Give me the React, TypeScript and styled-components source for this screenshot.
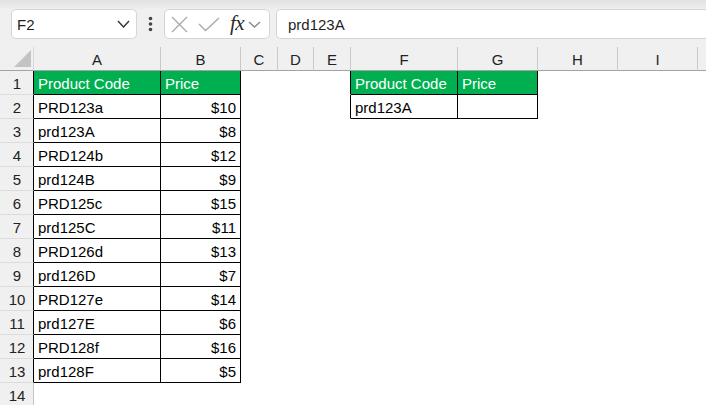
import React from 'react';
import styled, { createGlobalStyle } from 'styled-components';

const GlobalStyle = createGlobalStyle`
  html, body {
    margin: 0;
    padding: 0;
    background: #fff;
  }
  body {
    font-family: 'Liberation Sans', Arial, sans-serif;
    overflow: hidden;
  }
`;

type Row = { code: string; price: string };

const products: Row[] = [
	{ code: 'PRD123a', price: '$10' },
	{ code: 'prd123A', price: '$8' },
	{ code: 'PRD124b', price: '$12' },
	{ code: 'prd124B', price: '$9' },
	{ code: 'PRD125c', price: '$15' },
	{ code: 'prd125C', price: '$11' },
	{ code: 'PRD126d', price: '$13' },
	{ code: 'prd126D', price: '$7' },
	{ code: 'PRD127e', price: '$14' },
	{ code: 'prd127E', price: '$6' },
	{ code: 'PRD128f', price: '$16' },
	{ code: 'prd128F', price: '$5' },
];

const columns = ['A', 'B', 'C', 'D', 'E', 'F', 'G', 'H', 'I', ''];
const widths = [34, 127, 80, 37, 36, 37, 107, 80, 80, 80, 80];
const ROWS = 14;

// what sits in each cell, keyed by "row:col" (col 1 = A)
const cells: { [k: string]: { text: string; head?: boolean; right?: boolean } } = {
	'1:1': { text: 'Product Code', head: true },
	'1:2': { text: 'Price', head: true },
	'1:6': { text: 'Product Code', head: true },
	'1:7': { text: 'Price', head: true },
	'2:6': { text: 'prd123A' },
	'2:7': { text: '' },
};
products.forEach((p, i) => {
	cells[`${i + 2}:1`] = { text: p.code };
	cells[`${i + 2}:2`] = { text: p.price, right: true };
});

const inTable = (r: number, c: number) => cells[`${r}:${c}`] !== undefined;

const Page = styled.div`
  width: 706px;
  height: 405px;
  overflow: hidden;
  background: #fff;
`;

const FormulaBar = styled.div`
  display: flex;
  align-items: center;
  height: 47px;
  box-sizing: border-box;
  padding: 9px 0 8px 11px;
  background: linear-gradient(#e2e2e2 0, #ececec 8px, #f0f0f0 9px);
`;

const Box = styled.div`
  height: 30px;
  box-sizing: border-box;
  background: #fff;
  border: 1px solid #d5d5d5;
  border-radius: 5px;
  display: flex;
  align-items: center;
`;

const NameBox = styled(Box)`
  width: 126px;
  justify-content: space-between;
  padding: 0 6px 0 5px;
  font-size: 15px;
  color: #1f1f1f;
`;

const Dots = styled.svg`
  margin-left: 11px;
  flex: none;
`;

const FxBox = styled(Box)`
  width: 106px;
  margin-left: 11px;
  padding: 0 2px 0 6px;
  gap: 0;
`;

const Fx = styled.span`
  font-family: 'Liberation Serif', 'Times New Roman', serif;
  font-style: italic;
  font-size: 21px;
  color: #2b2b2b;
  margin: 0 4px 2px 10px;
  letter-spacing: -0.5px;
`;

const Input = styled(Box)`
  flex: 1;
  margin-left: 6px;
  border-right: none;
  border-radius: 5px 0 0 5px;
  padding-left: 11px;
  font-size: 15px;
  color: #1f1f1f;
`;

const Sheet = styled.div`
  display: grid;
  grid-template-columns: ${widths.map(w => `${w}px`).join(' ')};
  grid-auto-rows: 24px;
  font-size: 15px;
`;

const HeadCell = styled.div`
  box-sizing: border-box;
  background: #f0f0f0;
  border-right: 1px solid #c9c9c9;
  border-bottom: 1px solid #a3a3a3;
  text-align: center;
  line-height: 23px;
  padding-top: 1px;
  color: #222;
`;

const Corner = styled(HeadCell)`
  border-right-color: #dadada;
  position: relative;
`;

const RowHead = styled.div<{ $edge: string }>`
  box-sizing: border-box;
  background: #f0f0f0;
  border-right: 1px solid ${p => p.$edge};
  border-bottom: 1px solid #dcdcdc;
  text-align: center;
  line-height: 23px;
  padding-top: 1px;
  padding-left: 1px;
  color: #222;
`;

const Cell = styled.div<{ $fill?: boolean; $right: string; $bottom: string; $align: string }>`
  box-sizing: border-box;
  background: ${p => (p.$fill ? '#00b050' : '#fff')};
  color: ${p => (p.$fill ? '#fff' : '#000')};
  border-right: 1px solid ${p => p.$right};
  border-bottom: 1px solid ${p => p.$bottom};
  text-align: ${p => p.$align};
  line-height: 23px;
  padding: 1px 4px 0 4px;
  white-space: nowrap;
`;

const Chevron = ({ color, w, h }: { color: string; w: number; h: number }) => (
	<svg width={w + 2} height={h + 2} viewBox={`-1 -1 ${w + 2} ${h + 2}`}>
		<polyline points={`0,0 ${w / 2},${h} ${w},0`} fill='none' stroke={color} strokeWidth='1.4' />
	</svg>
);

const App = () => {
	const rows = Array.from({ length: ROWS }, (_, i) => i + 1);

	return <Page>
		<GlobalStyle />
		<FormulaBar>
			<NameBox>
				<span>F2</span>
				<Chevron color='#333' w={11} h={6} />
			</NameBox>
			<Dots width='5' height='16' viewBox='0 0 5 16'>
				<circle cx='2.5' cy='2.5' r='1.8' fill='#444' />
				<circle cx='2.5' cy='8' r='1.8' fill='#444' />
				<circle cx='2.5' cy='13.5' r='1.8' fill='#444' />
			</Dots>
			<FxBox>
				<svg width='17' height='17' viewBox='0 0 17 17'>
					<path d='M1 1 L16 16 M16 1 L1 16' stroke='#a8a8a8' strokeWidth='1.3' fill='none' />
				</svg>
				<svg width='22' height='15' viewBox='0 0 22 15' style={{ marginLeft: 10 }}>
					<polyline points='1,7 7.5,13.5 21,1' stroke='#a8a8a8' strokeWidth='1.3' fill='none' />
				</svg>
				<Fx>fx</Fx>
				<Chevron color='#8a8a8a' w={11} h={5} />
			</FxBox>
			<Input>prd123A</Input>
		</FormulaBar>
		<Sheet>
			<Corner>
				<svg width='34' height='23' viewBox='0 0 34 23' style={{ position: 'absolute', left: 0, top: 0 }}>
					<polygon points='31,3 31,20 14,20' fill='#c3c3c3' />
				</svg>
			</Corner>
			{ columns.map((c, i) => <HeadCell key={`h${i}`}>{ c }</HeadCell>) }
			{ rows.map(r => <React.Fragment key={r}>
				<RowHead $edge={inTable(r, 1) ? '#000' : '#c6c6c6'}>{ r }</RowHead>
				{ columns.map((_, i) => {
					const c = i + 1;
					const cell = cells[`${r}:${c}`];
					const right = inTable(r, c) || inTable(r, c + 1) ? '#000' : '#fff';
					const bottom = inTable(r, c) || inTable(r + 1, c) ? '#000' : '#fff';
					return <Cell
						key={`${r}:${c}`}
						$fill={cell?.head}
						$right={right}
						$bottom={bottom}
						$align={cell?.right ? 'right' : 'left'}
					>
						{ cell?.text }
					</Cell>;
				}) }
			</React.Fragment>) }
		</Sheet>
	</Page>;
};

export default App;
